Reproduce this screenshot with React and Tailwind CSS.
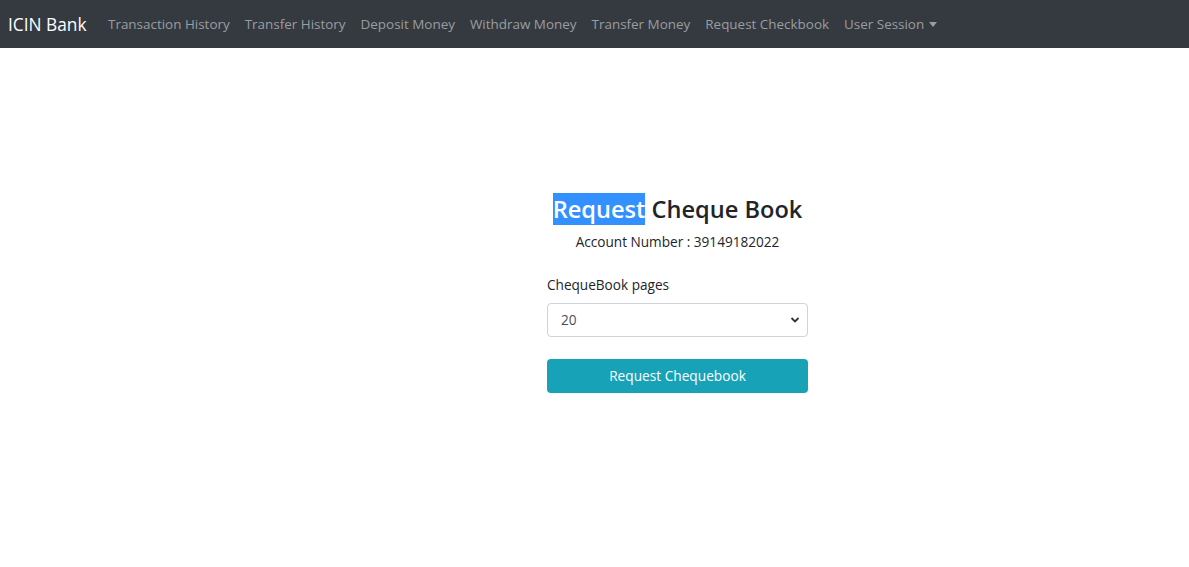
import React from "react";

const links = [
  "Transaction History",
  "Transfer History",
  "Deposit Money",
  "Withdraw Money",
  "Transfer Money",
  "Request Checkbook",
];

export default function App() {
  return (
    <div className="min-h-[567px] bg-white" style={{ fontFamily: '"Open Sans", "Noto Sans", sans-serif' }}>
      <nav className="h-[48px] bg-[#343a40] flex items-center pl-[8px] pt-[2px]">
        <span className="text-[17.3px] text-white mr-[14px] leading-none">ICIN Bank</span>
        <div className="flex items-center">
          {links.map((l) => (
            <span key={l} className="px-[7.5px] text-[13.45px] text-[#9a9da0] leading-none whitespace-nowrap">
              {l}
            </span>
          ))}
          <span className="px-[7.5px] text-[13.45px] text-[#9a9da0] leading-none whitespace-nowrap flex items-center">
            User Session
            <span className="ml-[5px] inline-block w-0 h-0 border-l-[4px] border-r-[4px] border-t-[5px] border-l-transparent border-r-transparent border-t-[#9a9da0]"></span>
          </span>
        </div>
      </nav>
      <div className="flex">
        <div className="ml-[547px] w-[261px] pt-[144px] flex flex-col">
          <h3 className="text-center text-[23.6px] font-semibold text-[#212529] leading-[34px] whitespace-nowrap">
            <span className="bg-[#3390ff] text-white">Request</span> Cheque Book
          </h3>
          <p className="text-center text-[13.6px] text-[#212529] mt-[6px] leading-[20px]">
            Account Number : 39149182022
          </p>
          <label className="mt-[23px] text-[13.6px] text-[#212529] leading-[20px]">ChequeBook pages</label>
          <div className="mt-[8px] h-[34px] border border-[#ced4da] rounded-[4px] flex items-center justify-between px-[13px] text-[13.6px] text-[#495057]">
            <span>20</span>
            <svg width="10" height="8" viewBox="0 0 10 8" className="mr-[-6px]">
              <path d="M1.5 2 L5 5.5 L8.5 2" stroke="#333" strokeWidth="1.8" fill="none" />
            </svg>
          </div>
          <button className="mt-[22px] h-[34px] bg-[#17a2b8] rounded-[4px] text-white text-[13.7px]">
            Request Chequebook
          </button>
        </div>
      </div>
    </div>
  );
}
